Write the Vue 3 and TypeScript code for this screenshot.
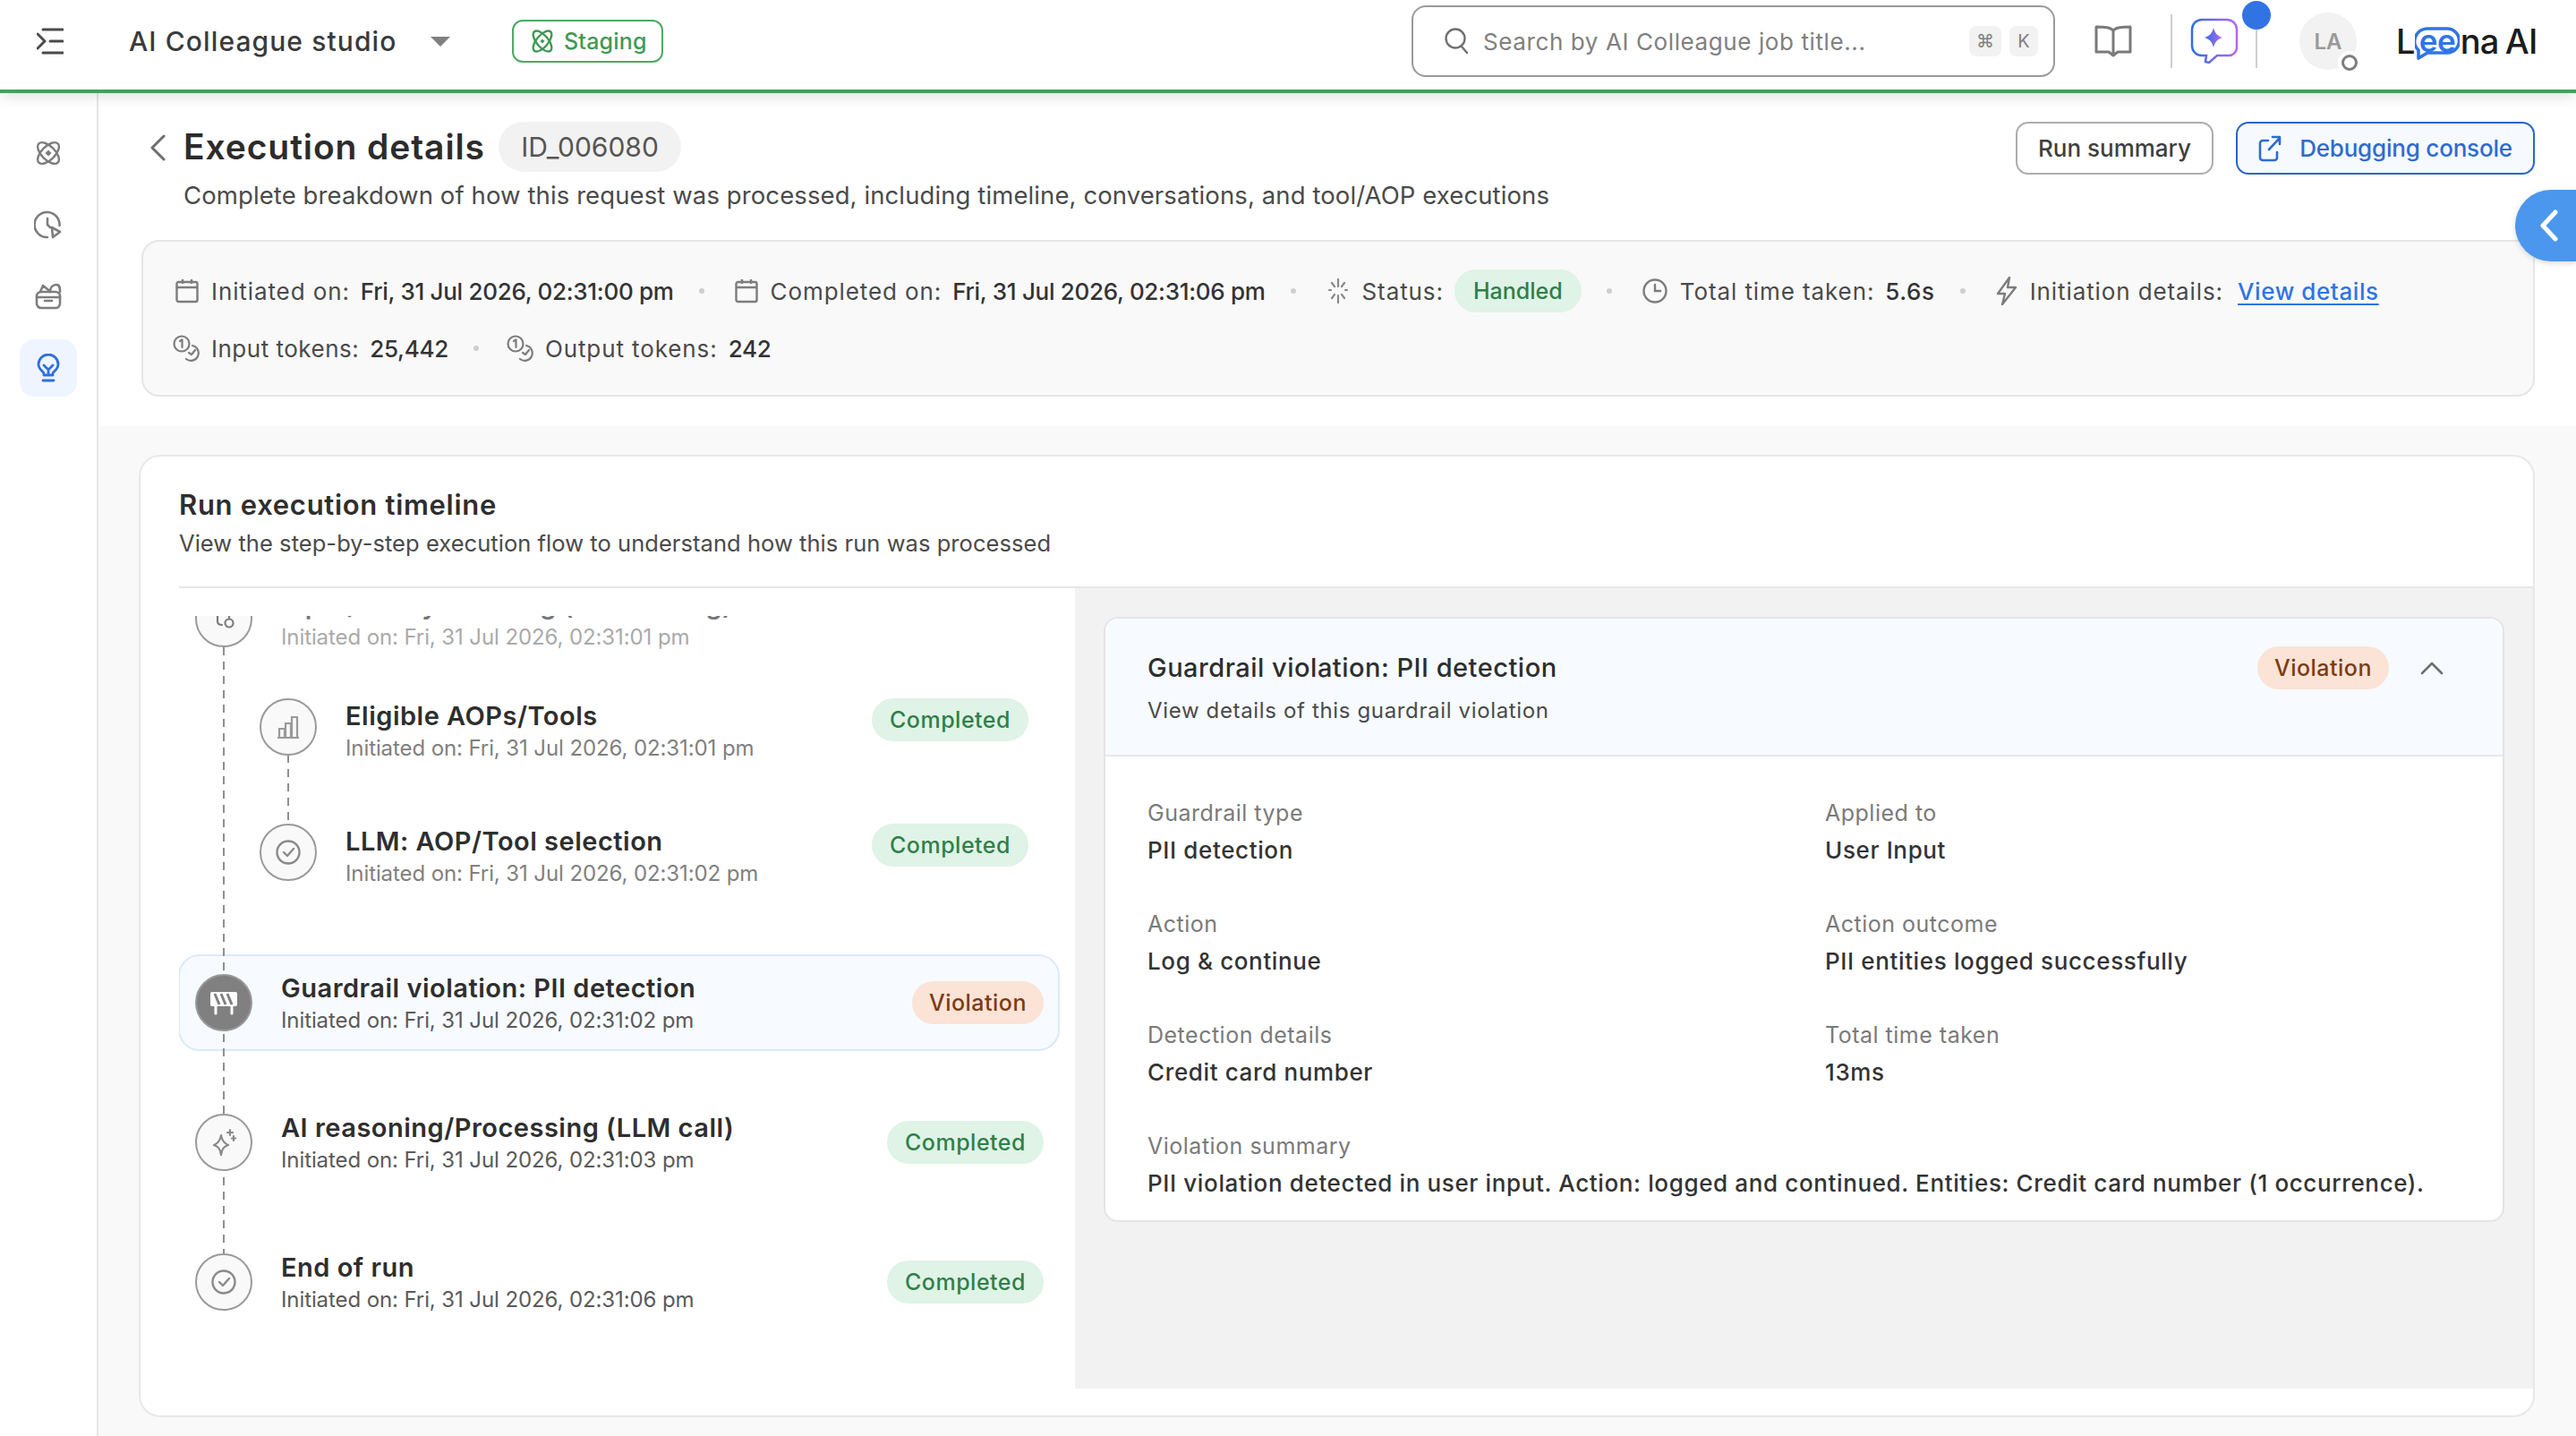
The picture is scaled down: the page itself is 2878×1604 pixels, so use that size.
<script setup lang="ts">
interface Step {
  title: string
  time: string
  badge: string
  icon: string
}
const rows: Step[] = [
  { title: 'AI reasoning/Processing (LLM call)', time: 'Initiated on: Fri, 31 Jul 2026, 02:31:03 pm', badge: 'Completed', icon: 'spark' },
  { title: 'End of run', time: 'Initiated on: Fri, 31 Jul 2026, 02:31:06 pm', badge: 'Completed', icon: 'check' },
]
const facts = [
  { label: 'Guardrail type', value: 'PII detection' },
  { label: 'Applied to', value: 'User Input' },
  { label: 'Action', value: 'Log & continue' },
  { label: 'Action outcome', value: 'PII entities logged successfully' },
  { label: 'Detection details', value: 'Credit card number' },
  { label: 'Total time taken', value: '13ms' },
]
</script>

<template>
  <div class="app">
    <header class="topbar">
      <svg class="menu" width="30" height="30" viewBox="0 0 30 30" fill="none" stroke="#4a4a4a" stroke-width="3" stroke-linecap="round" stroke-linejoin="round">
        <path d="M7 2h22M15 15h14M7 28h22M1 7l8 8-8 8" />
      </svg>
      <span class="studio">AI Colleague studio</span>
      <svg class="caret" width="22" height="11" viewBox="0 0 22 11"><path d="M0 0h22L11 11z" fill="#808080" /></svg>
      <span class="staging">
        <svg width="26" height="26" viewBox="0 0 26 26" fill="none" stroke="#3f9a54" stroke-width="2.4">
          <ellipse cx="13" cy="13" rx="14" ry="6.5" transform="rotate(50 13 13)" />
          <ellipse cx="13" cy="13" rx="14" ry="6.5" transform="rotate(-50 13 13)" />
          <path d="M13 10.5l2.5 2.5-2.5 2.5-2.5-2.5z" fill="#3f9a54" stroke="none" />
        </svg>
        Staging
      </span>
      <div class="search">
        <svg width="28" height="30" viewBox="0 0 28 30" fill="none" stroke="#707070" stroke-width="2.4" stroke-linecap="round">
          <circle cx="12" cy="12" r="10.5" /><path d="M19 21l6 7" />
        </svg>
        <span class="search-text">Search by AI Colleague job title...</span>
        <span class="kbd">⌘</span>
        <span class="kbd kbd-k">K</span>
      </div>
      <svg class="book" width="42" height="36" viewBox="0 0 42 36" fill="none" stroke="#7a7a7a" stroke-width="3" stroke-linejoin="round">
        <path d="M21 6C18 2.5 12 2 2 2v28h14l5 4 5-4h14V2C30 2 24 2.500 21 6zM21 6v26" />
      </svg>
      <span class="vline vl1"></span>
      <svg class="aichat" width="54" height="52" viewBox="0 0 54 52" fill="none">
        <defs>
          <linearGradient id="aig" x1="0" x2="1" y1="0" y2="0">
            <stop offset="0" stop-color="#2f6fe4" /><stop offset="1" stop-color="#b566f2" />
          </linearGradient>
        </defs>
        <path d="M13 2h28a11 11 0 0 1 11 11v20a9 9 0 0 1-9 9H30l-9 8-4-1 1-7h-5a11 11 0 0 1-11-11V13A11 11 0 0 1 13 2z" stroke="url(#aig)" stroke-width="2.500" />
        <path d="M26 11c1.500 6 4 9 10 11-6 2-8.500 5-10 11-1.500-6-4-9-10-11 6-2 8.500-5 10-11z" fill="url(#aig)" />
      </svg>
      <span class="pin">
        <span class="pin-dot"></span>
        <span class="pin-line"></span>
      </span>
      <span class="avatar">LA<span class="ring"></span></span>
      <span class="logo">L<span class="bubble"><svg width="50" height="37" viewBox="0 0 50 37" fill="none"><path d="M14 2h22a13.500 13.500 0 0 1 0 27H14l-10 6 0-9A14 14 0 0 1 14 2z" stroke="#2f74e8" stroke-width="3.600" stroke-linejoin="round" /></svg><span class="bubble-text">ee</span></span>na AI</span>
    </header>

    <div class="body">
      <aside class="side">
        <span class="side-btn">
          <svg width="28" height="28" viewBox="0 0 28 28" fill="none" stroke="#7d7d7d" stroke-width="2.400">
            <ellipse cx="14" cy="14" rx="15" ry="7.500" transform="rotate(45 14 14)" />
            <ellipse cx="14" cy="14" rx="15" ry="7.500" transform="rotate(-45 14 14)" />
            <path d="M14 10.500l3.500 3.500-3.500 3.500-3.500-3.500z" fill="#7d7d7d" stroke="none" />
          </svg>
        </span>
        <span class="side-btn">
          <svg width="32" height="32" viewBox="0 0 32 32" fill="none" stroke="#7d7d7d" stroke-width="2.600" stroke-linecap="round" stroke-linejoin="round">
            <path d="M28.500 17A14 14 0 1 0 15 30" /><path d="M15 9v7l3 3" /><path d="M20 19l9 5-8 6z" />
          </svg>
        </span>
        <span class="side-btn">
          <svg width="30" height="30" viewBox="0 0 30 30" fill="none" stroke="#7d7d7d" stroke-width="2.600" stroke-linecap="round" stroke-linejoin="round">
            <rect x="2" y="10" width="26" height="18" rx="5" /><path d="M2 16h26M11 20h8M6 10l3-7 5 4 3 3M17 10c0-5 3-8 7-8s4 4 4 8" />
          </svg>
        </span>
        <span class="side-btn active">
          <svg width="26" height="32" viewBox="0 0 26 32" fill="none" stroke="#2f6fe0" stroke-width="2.800" stroke-linecap="round" stroke-linejoin="round">
            <path d="M8 24v-2c0-2-6-4-6-10a11 11 0 0 1 22 0c0 6-6 8-6 10v2zM7 30h12M8 13l5 5 5-5M13 18v6" />
          </svg>
        </span>
      </aside>

      <main class="main">
        <section class="head">
          <div class="title-row">
            <svg class="back" width="18" height="30" viewBox="0 0 18 30" fill="none" stroke="#6e6e6e" stroke-width="3" stroke-linecap="round" stroke-linejoin="round">
              <path d="M16 2L3 15l13 13" />
            </svg>
            <div class="title-col">
              <div class="title-line">
                <h1>Execution details</h1>
                <span class="idchip">ID_006080</span>
              </div>
              <p class="lead">Complete breakdown of how this request was processed, including timeline, conversations, and tool/AOP executions</p>
            </div>
            <button class="btn run">Run summary</button>
            <button class="btn primary">
              <svg width="26" height="30" viewBox="0 0 26 30" fill="none" stroke="#2f6bd0" stroke-width="2.600" stroke-linecap="round" stroke-linejoin="round">
                <path d="M11 6H5a3 3 0 0 0-3 3v16a3 3 0 0 0 3 3h13a3 3 0 0 0 3-3v-6M12 16L24 3M16 2h8v8" />
              </svg>
              Debugging console
            </button>
          </div>

          <div class="info">
            <div class="info-row">
              <svg class="ic" width="26" height="28" viewBox="0 0 26 28" fill="none" stroke="#7d7d7d" stroke-width="2.400"><rect x="1.500" y="4" width="23" height="22" rx="2" /><path d="M1.500 10h23M8 1v5M18 1v5" /></svg>
              <span class="k">Initiated on:</span><span class="v">Fri, 31 Jul 2026, 02:31:00 pm</span>
              <i class="dot"></i>
              <svg class="ic" width="26" height="28" viewBox="0 0 26 28" fill="none" stroke="#7d7d7d" stroke-width="2.400"><rect x="1.500" y="4" width="23" height="22" rx="2" /><path d="M1.500 10h23M8 1v5M18 1v5" /></svg>
              <span class="k">Completed on:</span><span class="v">Fri, 31 Jul 2026, 02:31:06 pm</span>
              <i class="dot"></i>
              <svg class="ic" width="26" height="28" viewBox="0 0 26 28" fill="none" stroke="#8a8a8a" stroke-width="2.200" stroke-linecap="round"><path d="M13 1v8M13 19v8M3 13h2M21 13h2M6 5l3 4M20 5l-3 4M6 22l3-4M20 22l-3-4" /></svg>
              <span class="k">Status:</span>
              <span class="chip green handled">Handled</span>
              <i class="dot"></i>
              <svg class="ic" width="28" height="28" viewBox="0 0 28 28" fill="none" stroke="#7d7d7d" stroke-width="2.400" stroke-linecap="round"><circle cx="14" cy="14" r="12.500" /><path d="M14 7v7h6" /></svg>
              <span class="k">Total time taken:</span><span class="v v-time">5.6s</span>
              <i class="dot"></i>
              <svg class="ic" width="24" height="32" viewBox="0 0 24 32" fill="none" stroke="#7d7d7d" stroke-width="2.400" stroke-linejoin="round"><path d="M15 1L2 19h8l-3 12L22 12h-9z" /></svg>
              <span class="k">Initiation details:</span><a class="link">View details</a>
            </div>
            <div class="info-row">
              <svg class="ic token" width="30" height="30" viewBox="0 0 30 30" fill="none" stroke="#7d7d7d" stroke-width="2.200" stroke-linecap="round" stroke-linejoin="round"><circle cx="10" cy="10" r="8.500" /><path d="M8 7l2.500-1.500V14" /><path d="M22 12a8.500 8.500 0 1 1-7 15" /><path d="M18 20l3 2 4-5" /></svg>
              <span class="k k-tight">Input tokens:</span><span class="v">25,442</span>
              <i class="dot"></i>
              <svg class="ic token" width="30" height="30" viewBox="0 0 30 30" fill="none" stroke="#7d7d7d" stroke-width="2.200" stroke-linecap="round" stroke-linejoin="round"><circle cx="10" cy="10" r="8.500" /><path d="M8 7l2.500-1.500V14" /><path d="M22 12a8.500 8.500 0 1 1-7 15" /><path d="M18 20l3 2 4-5" /></svg>
              <span class="k">Output tokens:</span><span class="v">242</span>
            </div>
          </div>
        </section>

        <section class="lower">
          <div class="card">
            <div class="card-head">
              <h2>Run execution timeline</h2>
              <p>View the step-by-step execution flow to understand how this run was processed</p>
            </div>
            <div class="split">
              <div class="timeline">
                <div class="tl-clip">
                  <div class="tl-inner">
                    <span class="rail"></span>
                    <span class="subrail"></span>

                    <div class="step faded">
                      <span class="node">
                        <svg width="26" height="30" viewBox="0 0 26 30" fill="none" stroke="#7d7d7d" stroke-width="2.200" stroke-linecap="round"><path d="M6 4v14c0 3 2 4 5 4" /><circle cx="19" cy="20" r="4.500" /><path d="M19 4v11" /></svg>
                      </span>
                      <div class="st">
                        <div class="st-title">Input/Query handling (Pre-routing)</div>
                        <div class="st-time">Initiated on: Fri, 31 Jul 2026, 02:31:01 pm</div>
                      </div>
                    </div>

                    <div class="subsec">
                      <div class="step sub">
                        <span class="node">
                          <svg width="28" height="28" viewBox="0 0 28 28" fill="none" stroke="#9a9a9a" stroke-width="2.200"><path d="M2 26h24M4 26V16h6v10M11 26V10h6v16M18 26V3h6v23" /></svg>
                        </span>
                        <div class="st">
                          <div class="st-title">Eligible AOPs/Tools</div>
                          <div class="st-time">Initiated on: Fri, 31 Jul 2026, 02:31:01 pm</div>
                        </div>
                        <span class="chip green">Completed</span>
                      </div>
                      <div class="step sub sub-b">
                        <span class="node">
                          <svg width="28" height="28" viewBox="0 0 28 28" fill="none" stroke="#8a8a8a" stroke-width="2.400" stroke-linecap="round" stroke-linejoin="round"><circle cx="14" cy="14" r="12.500" /><path d="M9 14l4 4 7-8" /></svg>
                        </span>
                        <div class="st">
                          <div class="st-title">LLM: AOP/Tool selection</div>
                          <div class="st-time">Initiated on: Fri, 31 Jul 2026, 02:31:02 pm</div>
                        </div>
                        <span class="chip green">Completed</span>
                      </div>
                    </div>

                    <div class="step selected">
                      <span class="node dark">
                        <svg width="32" height="30" viewBox="0 0 32 30" fill="none"><rect x="1" y="3" width="30" height="16" rx="2" fill="#fff" /><path d="M6 5l5 12M13 5l5 12M20 5l5 12" stroke="#808080" stroke-width="3" /><path d="M7 19v8M25 19v8" stroke="#fff" stroke-width="3" stroke-linecap="round" /></svg>
                      </span>
                      <div class="st">
                        <div class="st-title">Guardrail violation: PII detection</div>
                        <div class="st-time">Initiated on: Fri, 31 Jul 2026, 02:31:02 pm</div>
                      </div>
                      <span class="chip orange">Violation</span>
                    </div>

                    <div v-for="r in rows" :key="r.title" class="step plain">
                      <span class="node">
                        <svg v-if="r.icon === 'spark'" width="32" height="32" viewBox="0 0 32 32" fill="none" stroke="#8a8a8a" stroke-width="2.200" stroke-linejoin="round"><path d="M13 8c1 6 3 9 8 11-5 2-7 4-8 11-1-7-3-9-8-11 5-2 7-5 8-11z" /><path d="M23 2v6M20 5h6M27 9v5M25 11.500h4" stroke-linecap="round" /></svg>
                        <svg v-else width="28" height="28" viewBox="0 0 28 28" fill="none" stroke="#8a8a8a" stroke-width="2.400" stroke-linecap="round" stroke-linejoin="round"><circle cx="14" cy="14" r="12.500" /><path d="M9 14l4 4 7-8" /></svg>
                      </span>
                      <div class="st">
                        <div class="st-title">{{ r.title }}</div>
                        <div class="st-time">{{ r.time }}</div>
                      </div>
                      <span class="chip green">{{ r.badge }}</span>
                    </div>
                  </div>
                </div>
              </div>

              <div class="panel">
                <article class="detail">
                  <div class="detail-head">
                    <div class="dh-text">
                      <h3>Guardrail violation: PII detection</h3>
                      <p>View details of this guardrail violation</p>
                    </div>
                    <span class="chip orange">Violation</span>
                    <svg class="up" width="26" height="15" viewBox="0 0 26 15" fill="none" stroke="#6e6e6e" stroke-width="2.600" stroke-linecap="round" stroke-linejoin="round"><path d="M2 13L13 2l11 11" /></svg>
                  </div>
                  <div class="facts">
                    <div v-for="f in facts" :key="f.label" class="fact">
                      <span class="f-l">{{ f.label }}</span>
                      <span class="f-v">{{ f.value }}</span>
                    </div>
                    <div class="fact wide">
                      <span class="f-l">Violation summary</span>
                      <span class="f-v">PII violation detected in user input. Action: logged and continued. Entities: Credit card number (1 occurrence).</span>
                    </div>
                  </div>
                </article>
              </div>
            </div>
          </div>
        </section>
      </main>
    </div>

    <button class="collapse" aria-label="Collapse">
      <svg width="22" height="36" viewBox="0 0 22 36" fill="none" stroke="#fff" stroke-width="5" stroke-linecap="round" stroke-linejoin="round"><path d="M18 3L4 18l14 15" /></svg>
    </button>
  </div>
</template>

<style>
html, body { margin: 0; background: #fff; }
</style>

<style scoped>
* { box-sizing: border-box; }
.app {
  position: relative;
  width: 2878px;
  height: 1604px;
  overflow: hidden;
  display: flex;
  flex-direction: column;
  font-family: Inter, "Noto Sans", sans-serif;
  color: #333;
  background: #fff;
}
h1, h2, h3, p { margin: 0; }

.topbar {
  position: relative;
  z-index: 2;
  height: 104px;
  flex: none;
  display: flex;
  align-items: center;
  padding-bottom: 8px;
  background: #fff;
  border-bottom: 4px solid #4a9d5b;
  box-shadow: 0 4px 14px rgba(0, 0, 0, 0.12);
}
.menu { margin-left: 41px; }
.studio { margin-left: 73px; width: 299px; font-size: 30px; font-weight: 500; color: #3a3a3a; white-space: nowrap; letter-spacing: 1.1px; }
.caret { margin-left: 38px; }
.staging {
  margin-left: 69px;
  width: 169px;
  height: 48px;
  display: flex;
  align-items: center;
  gap: 11px;
  padding-left: 19px;
  border: 2px solid #4fa864;
  border-radius: 12px;
  color: #3f9a54;
  font-size: 25px;
  font-weight: 500;
  letter-spacing: 0.2px;
}
.search {
  margin-left: 836px;
  width: 719px;
  height: 80px;
  display: flex;
  align-items: center;
  padding-left: 35px;
  border: 2px solid #9a9a9a;
  border-radius: 16px;
  color: #808080;
}
.search-text { margin-left: 15px; width: 543px; font-size: 26px; white-space: nowrap; letter-spacing: 0.6px; }
.kbd {
  width: 36px;
  height: 34px;
  display: flex;
  align-items: center;
  justify-content: center;
  background: #f2f2f2;
  border-radius: 8px;
  font-size: 20px;
  color: #808080;
  font-family: "DejaVu Sans", sans-serif;
}
.kbd-k { width: 32px; margin-left: 9px; font-family: Inter, sans-serif; }
.book { margin-left: 44px; }
.vline { width: 2px; height: 60px; background: #cfcfcf; }
.vl1 { margin-left: 43px; }
.aichat { margin-left: 20px; }
.pin { margin-left: 4px; width: 32px; align-self: flex-start; display: flex; flex-direction: column; align-items: center; }
.pin-dot { width: 32px; height: 32px; margin-top: 1px; border-radius: 50%; background: #3273e4; flex: none; }
.pin-line { width: 2px; height: 43px; background: #cfcfcf; }
.avatar {
  position: relative;
  margin-left: 32px;
  width: 64px;
  height: 64px;
  display: flex;
  align-items: center;
  justify-content: center;
  border-radius: 50%;
  background: #f2f2f2;
  color: #999;
  font-size: 24px;
  font-weight: 600;
}
.ring {
  position: absolute;
  right: -1px;
  bottom: -1px;
  width: 18px;
  height: 18px;
  border: 3.500px solid #7d7d7d;
  border-radius: 50%;
  background: #fff;
  box-shadow: 0 0 0 4px #fff;
}
.logo {
  margin-left: 44px;
  display: flex;
  align-items: center;
  font-size: 38px;
  font-weight: 500;
  color: #1c1c1c;
  line-height: 48px;
  letter-spacing: -0.8px;
  word-spacing: -2px;
  white-space: pre;
}
.bubble { position: relative; width: 50px; height: 40px; margin: 0 1px 0 0; top: 4px; }
.bubble svg { position: absolute; left: 0; top: 0; }
.bubble-text { position: absolute; left: 5px; top: -9px; color: #2f74e8; font-size: 35px; font-weight: 600; letter-spacing: -0.5px; }

.body { flex: 1; display: flex; min-height: 0; }
.side {
  width: 110px;
  flex: none;
  display: flex;
  flex-direction: column;
  align-items: center;
  padding: 35px 0 0;
  gap: 16px;
  border-right: 2px solid #e6e6e6;
}
.side-btn { width: 64px; height: 64px; display: flex; align-items: center; justify-content: center; border-radius: 16px; }
.side-btn.active { background: #eff5ff; }
.main { flex: 1; min-width: 0; display: flex; flex-direction: column; }
.head { height: 372px; flex: none; padding: 32px 46px 0 48px; background: #fff; }
.title-row { display: flex; align-items: flex-start; height: 132px; }
.back { margin: 14px 20px 0 9px; flex: none; }
.title-col { flex: 1; min-width: 0; }
.title-line { display: flex; align-items: center; height: 56px; gap: 19px; }
h1 { font-size: 39px; font-weight: 600; color: #2c2c2c; letter-spacing: 0.9px; white-space: nowrap; width: 333px; margin-top: -2px; }
.idchip {
  width: 204px;
  height: 56px;
  display: flex;
  align-items: center;
  justify-content: center;
  border-radius: 28px;
  background: #f2f2f2;
  color: #555;
  font-size: 30px;
}
.lead { margin-top: 8px; font-size: 27.500px; line-height: 36px; color: #4a4a4a; white-space: nowrap; letter-spacing: 0.1px; }
.btn {
  height: 59px;
  display: flex;
  align-items: center;
  justify-content: center;
  gap: 16px;
  margin-left: 25px;
  flex: none;
  background: #fff;
  border: 2px solid #adadad;
  border-radius: 14px;
  color: #3f3f3f;
  font: 500 26px Inter, sans-serif;
  white-space: nowrap;
}
.btn.run { width: 221px; }
.btn.primary { width: 334px; gap: 20px; background: #f6faff; border-color: #2b64c8; color: #2f6bd0; letter-spacing: -0.2px; }

.info {
  height: 175px;
  padding: 23px 34px 0 36px;
  background: #f9f9f9;
  border: 2px solid #e6e6e6;
  border-radius: 20px;
}
.info-row { height: 64px; display: flex; align-items: center; font-size: 26px; color: #3a3a3a; white-space: nowrap; }
.ic { flex: none; margin-right: 14px; }
.ic.token { margin-left: -3px; margin-right: 13px; }
.k { margin-right: 12px; color: #4a4a4a; letter-spacing: 0.9px; }
.k-tight { letter-spacing: 0.5px; }
.v { font-weight: 500; color: #333; letter-spacing: -0.3px; }
.v-time { letter-spacing: 0.6px; }
.dot { width: 6px; height: 6px; margin: 0 34px 0 28px; border-radius: 50%; background: #cfcfcf; flex: none; }
.link { margin-left: 4px; color: #3273e4; text-decoration: underline; text-underline-offset: 4px; font-weight: 500; letter-spacing: 0.6px; }

.chip {
  height: 48px;
  display: inline-flex;
  align-items: center;
  justify-content: center;
  padding: 0 19px;
  border-radius: 24px;
  font-size: 25px;
  font-weight: 500;
  letter-spacing: 0.5px;
  white-space: nowrap;
  flex: none;
}
.chip.green { padding: 0 20px; background: #dff3e7; color: #2f7f47; }
.chip.orange { background: #fbe3d6; color: #7b3c10; }
.chip.green.handled { width: 142px; padding: 0; letter-spacing: 0; }

.lower { flex: 1; min-height: 0; background: #f9f9f9; padding: 32px 46px 21px 45px; }
.card {
  height: 100%;
  display: flex;
  flex-direction: column;
  background: #fff;
  border: 2px solid #e8e8e8;
  border-radius: 24px;
  padding-bottom: 30px;
}
.card-head { height: 145px; flex: none; padding: 34px 0 0 43px; }
h2 { font-size: 31px; line-height: 40px; font-weight: 600; color: #2e2e2e; letter-spacing: 0.7px; }
.card-head p { margin-top: 6px; font-size: 25.500px; line-height: 34px; color: #4a4a4a; letter-spacing: 0.05px; }
.split { flex: 1; min-height: 0; display: flex; margin-left: 43px; border-top: 2px solid #e6e6e6; }
.timeline { width: 1001px; flex: none; padding-top: 31px; display: flex; }
.tl-clip { flex: 1; min-width: 0; overflow: hidden; }
.tl-inner { position: relative; margin-top: -29px; height: 900px; }
.rail {
  position: absolute;
  z-index: 1;
  left: 49px;
  top: 64px;
  width: 2px;
  height: 740px;
  background: repeating-linear-gradient(to bottom, #8f8f8f 0 9px, transparent 9px 16px);
}
.subrail {
  position: absolute;
  z-index: 1;
  left: 121px;
  top: 184px;
  width: 2px;
  height: 77px;
  background: repeating-linear-gradient(to bottom, #8f8f8f 0 9px, transparent 9px 16px);
}

.step { display: flex; align-items: center; }
.step .st { flex: 1; min-width: 0; }
.node {
  position: relative;
  z-index: 2;
  width: 64px;
  height: 64px;
  flex: none;
  display: flex;
  align-items: center;
  justify-content: center;
  border-radius: 50%;
  background: #f9f9f9;
  border: 2px solid #9a9a9a;
}
.node.dark { background: #808080; border-color: #999; }
.st-title { font-size: 29px; line-height: 36px; font-weight: 600; color: #2e2e2e; white-space: nowrap; letter-spacing: 0.5px; }
.st-time { font-size: 24px; line-height: 36px; color: #5a5a5a; white-space: nowrap; letter-spacing: -0.1px; }
.faded { height: 64px; padding-left: 18px; }
.faded .st { margin: 6px 0 0 32px; }
.faded .st-title { color: #777; }
.faded .st-time { color: #aaa; }
.subsec { padding-top: 57px; }
.sub { height: 64px; padding-left: 90px; padding-right: 52px; }
.sub-b { margin-top: 76px; }
.sub .st { margin-left: 32px; margin-top: 12px; }
.sub .st-time { color: #808080; }
.sub .chip { align-self: flex-start; }
.selected {
  margin-top: 82px;
  height: 108px;
  padding: 0 16px 0 17px;
  background: #f7fbff;
  border: 2px solid #dbe9fb;
  border-radius: 24px;
  margin-right: 17px;
  margin-left: -1px;
}
.selected .st { margin: 4px 0 0 32px; }
.plain { height: 64px; margin-top: 70px; padding-left: 18px; padding-right: 18px; margin-right: 17px; }
.plain .st { margin: 4px 0 0 32px; }
.plain + .plain { margin-top: 92px; }

.panel { flex: 1; min-width: 0; background: #f2f2f2; padding: 32px 32px 0; }
.detail {
  height: 676px;
  background: #fff;
  border: 2px solid #e4e4e4;
  border-radius: 16px;
  overflow: hidden;
}
.detail-head {
  height: 154px;
  display: flex;
  align-items: flex-start;
  padding: 31px 46px 0 47px;
  background: #f7fbff;
  border-bottom: 2px solid #e4e8ec;
}
.dh-text { flex: 1; }
h3 { font-size: 29px; line-height: 48px; font-weight: 500; color: #2e2e2e; letter-spacing: 0.5px; }
.dh-text p { margin-top: 6px; font-size: 24px; line-height: 36px; color: #4a4a4a; letter-spacing: 0.65px; }
.up { margin: 17px 20px 0 35px; }
.facts { display: grid; grid-template-columns: 757px 1fr; padding: 46px 47px 0; row-gap: 40px; }
.fact { display: flex; flex-direction: column; gap: 8px; height: 84px; }
.fact.wide { grid-column: 1 / 3; }
.f-l { font-size: 25px; line-height: 34px; color: #7a7a7a; letter-spacing: 0.5px; }
.f-v { font-size: 26px; line-height: 34px; font-weight: 500; color: #333; white-space: nowrap; letter-spacing: 0.63px; }

.collapse {
  position: absolute;
  right: 0;
  top: 212px;
  width: 68px;
  height: 80px;
  z-index: 3;
  display: flex;
  align-items: center;
  justify-content: center;
  padding: 0 0 0 8px;
  background: #4c97ee;
  border: none;
  border-radius: 40px 0 0 40px;
  box-shadow: 0 2px 6px rgba(0, 0, 0, 0.15);
}
</style>
